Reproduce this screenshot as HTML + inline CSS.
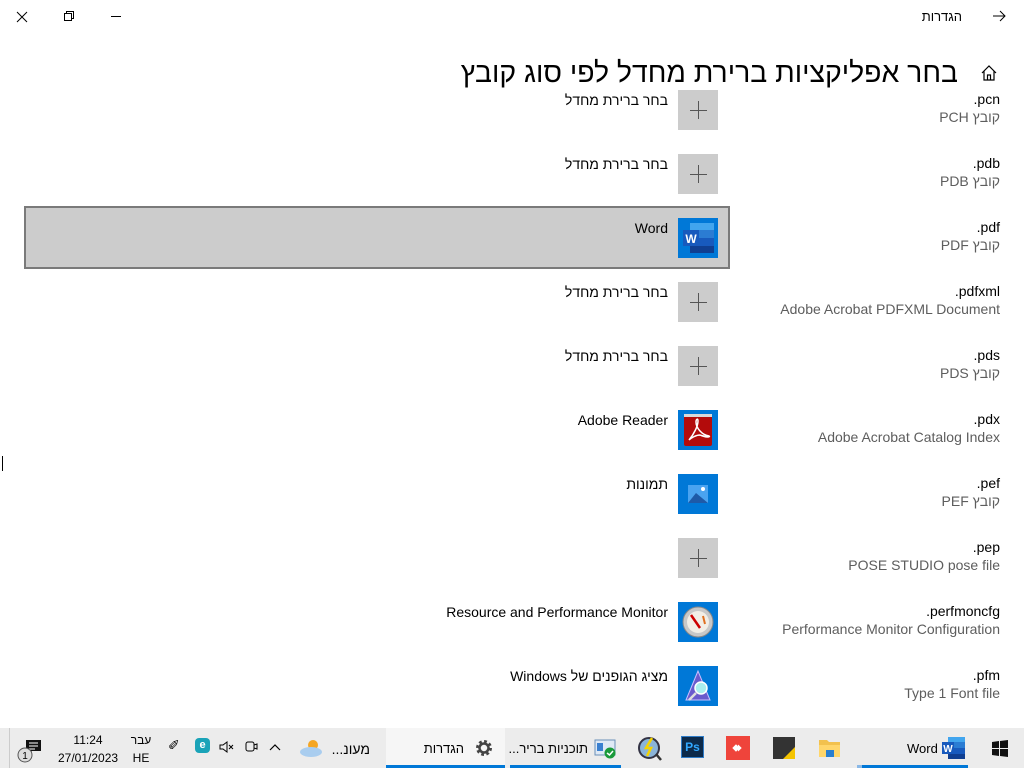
<!DOCTYPE html>
<html><head><meta charset="utf-8"><style>
*{margin:0;padding:0;box-sizing:border-box}
body{width:1024px;height:768px;background:#fff;position:relative;overflow:hidden;font-family:"Liberation Sans","Noto Sans CJK SC",sans-serif;color:#000}
.a{position:absolute}
.t{font-size:14px;white-space:nowrap;line-height:18px}
.r{direction:rtl;text-align:right}
.e{direction:ltr;text-align:right}
.ic{position:absolute;width:40px;height:40px;left:678px}
.plus{background:#cccccc}
.plus:before{content:"";position:absolute;left:12px;top:19.5px;width:17px;height:1px;background:#555}
.plus:after{content:"";position:absolute;left:20px;top:11px;width:1px;height:18px;background:#555}
.blue{background:#0078d7}
.sub{color:#5d5d5d}
#tb{position:absolute;left:0;top:728px;width:1024px;height:40px;background:#ececec}
</style></head><body>

<div class="a" style="left:24px;top:206px;width:706px;height:63px;background:#cccccc;border:2px solid #7a7a7a"></div>

<div class="ic plus" style="top:90px"></div>
<div class="a t r" style="right:356px;top:91px">בחר ברירת מחדל</div>
<div class="a t e" style="right:24px;top:90px">.pcn</div>
<div class="a t r sub" style="right:24px;top:108px">קובץ PCH</div>

<div class="ic plus" style="top:154px"></div>
<div class="a t r" style="right:356px;top:155px">בחר ברירת מחדל</div>
<div class="a t e" style="right:24px;top:154px">.pdb</div>
<div class="a t r sub" style="right:24px;top:172px">קובץ PDB</div>

<div class="ic blue" style="top:218px"><svg width="40" height="40"><rect x="12" y="5" width="24" height="7" fill="#41a5ee"/><rect x="12" y="12" width="24" height="8" fill="#2b7cd3"/><rect x="12" y="20" width="24" height="8" fill="#185abd"/><rect x="12" y="28" width="24" height="7" fill="#103f91"/><rect x="5" y="12" width="16" height="16" fill="#185abd"/><text x="13" y="25" font-size="12" font-weight="bold" fill="#fff" text-anchor="middle" font-family="Liberation Sans">W</text></svg></div>
<div class="a t r" style="right:356px;top:219px">Word</div>
<div class="a t e" style="right:24px;top:218px">.pdf</div>
<div class="a t r sub" style="right:24px;top:236px">קובץ PDF</div>

<div class="ic plus" style="top:282px"></div>
<div class="a t r" style="right:356px;top:283px">בחר ברירת מחדל</div>
<div class="a t e" style="right:24px;top:282px">.pdfxml</div>
<div class="a t sub" style="right:24px;top:300px">Adobe Acrobat PDFXML Document</div>

<div class="ic plus" style="top:346px"></div>
<div class="a t r" style="right:356px;top:347px">בחר ברירת מחדל</div>
<div class="a t e" style="right:24px;top:346px">.pds</div>
<div class="a t r sub" style="right:24px;top:364px">קובץ PDS</div>

<div class="ic blue" style="top:410px"><svg width="40" height="40"><rect x="6" y="4" width="28" height="32" rx="2" fill="#b30b0b"/><rect x="6" y="4" width="28" height="3" fill="#d9d9d9"/><path d="M11 30 C16 24 20 16 20 11 C20 8 18 9 18 12 C18 18 24 25 31 26 C33 27 28 28 22 25 C18 25 13 28 11 30Z" fill="none" stroke="#fff" stroke-width="1.5"/></svg></div>
<div class="a t" style="right:356px;top:411px">Adobe Reader</div>
<div class="a t e" style="right:24px;top:410px">.pdx</div>
<div class="a t sub" style="right:24px;top:428px">Adobe Acrobat Catalog Index</div>

<div class="ic blue" style="top:474px"><svg width="40" height="40"><rect x="10" y="11" width="20" height="18" fill="#4aa3f0"/><path d="M10 29 L18 19 L30 29Z" fill="#1e5aa8"/><circle cx="25" cy="15" r="2" fill="#fff"/></svg></div>
<div class="a t r" style="right:356px;top:475px">תמונות</div>
<div class="a t e" style="right:24px;top:474px">.pef</div>
<div class="a t r sub" style="right:24px;top:492px">קובץ PEF</div>

<div class="ic plus" style="top:538px"></div>
<div class="a t e" style="right:24px;top:538px">.pep</div>
<div class="a t sub" style="right:24px;top:556px">POSE STUDIO pose file</div>

<div class="ic blue" style="top:602px"><svg width="40" height="40"><circle cx="20" cy="20" r="15" fill="#c8c8c8" stroke="#888"/><circle cx="20" cy="20" r="11" fill="#f2eee6"/><path d="M13 13 L22 26" stroke="#c00" stroke-width="2.5"/><path d="M25 14 L27 22" stroke="#e07020" stroke-width="2"/></svg></div>
<div class="a t" style="right:356px;top:603px">Resource and Performance Monitor</div>
<div class="a t e" style="right:24px;top:602px">.perfmoncfg</div>
<div class="a t sub" style="right:24px;top:620px">Performance Monitor Configuration</div>

<div class="ic blue" style="top:666px"><svg width="40" height="40"><path d="M20 5 L8 34 L32 34Z" fill="#6a5acd" stroke="#c8c0ff"/><circle cx="23" cy="22" r="6" fill="#aee" stroke="#fff" stroke-width="1.5"/><path d="M18 27 L11 34" stroke="#ddd" stroke-width="2.5"/></svg></div>
<div class="a t r" style="right:356px;top:667px">מציג הגופנים של Windows</div>
<div class="a t e" style="right:24px;top:666px">.pfm</div>
<div class="a t sub" style="right:24px;top:684px">Type 1 Font file</div>

<div class="a" style="left:2px;top:456px;width:1px;height:15px;background:#000"></div>

<div class="a" style="left:0;top:0;width:1024px;height:90px;background:#fff"></div>
<svg class="a" style="left:14px;top:9px" width="16" height="16"><path d="M3 3 L13 13 M13 3 L3 13" stroke="#000" stroke-width="1"/></svg>
<svg class="a" style="left:62px;top:9px" width="14" height="14"><rect x="2.5" y="4.5" width="7" height="7" fill="none" stroke="#000"/><path d="M4.5 4.5 V2.5 H11.5 V9.5 H9.5" fill="none" stroke="#000"/></svg>
<div class="a" style="left:111px;top:16px;width:10px;height:1px;background:#000"></div>
<div class="a t r" style="right:62px;top:8px;font-size:13px">הגדרות</div>
<svg class="a" style="left:992px;top:9px" width="14" height="14"><path d="M1 7 H13 M8 2 L13 7 L8 12" fill="none" stroke="#000"/></svg>
<div class="a r" style="right:66px;top:53px;font-size:28.4px;line-height:40px;white-space:nowrap">בחר אפליקציות ברירת מחדל לפי סוג קובץ</div>
<svg class="a" style="left:980px;top:64px" width="18" height="18"><path d="M2 9 L9 2 L16 9 M4 7 V16 H14 V7 M7.5 16 V11 H10.5 V16" fill="none" stroke="#000" stroke-width="1.2"/></svg>

<div id="tb"></div>
<div class="a" style="left:386px;top:728px;width:119px;height:40px;background:#f6f6f6"></div>
<div class="a" style="left:386px;top:765px;width:119px;height:3px;background:#0078d7"></div>
<div class="a" style="left:510px;top:765px;width:111px;height:3px;background:#0078d7"></div>
<div class="a" style="left:857px;top:765px;width:5px;height:3px;background:#8ab8e6"></div>
<div class="a" style="left:862px;top:765px;width:106px;height:3px;background:#0078d7"></div>
<div class="a" style="left:9px;top:728px;width:1px;height:40px;background:#ccc"></div>

<svg class="a" style="left:16px;top:738px" width="28" height="26"><path d="M10 2 H25 V13 H16 L13 16 V13 H10Z" fill="#111"/><path d="M13 5 H22 M13 8 H22 M13 11 H19" stroke="#fff"/><circle cx="9" cy="17" r="7" fill="#ddd" stroke="#555"/><text x="9" y="21" font-size="10" text-anchor="middle" font-family="Liberation Sans">1</text></svg>
<div class="a" style="left:58px;top:731px;font-size:12px;line-height:18px;text-align:center;width:60px">11:24<br>27/01/2023</div>
<div class="a" style="left:127px;top:731px;font-size:12px;line-height:18px;text-align:center;width:28px">עבר<br>HE</div>
<div class="a" style="left:168px;top:737px;font-size:14px">✐</div>
<div class="a" style="left:195px;top:738px;width:15px;height:15px;border-radius:4px;background:#1aa3b8;color:#fff;font-size:11px;font-weight:bold;text-align:center;line-height:15px">e</div>
<svg class="a" style="left:218px;top:740px" width="18" height="14"><path d="M2 5 H5 L9 2 V12 L5 9 H2Z" fill="none" stroke="#000"/><path d="M11 5 L15 9 M15 5 L11 9" stroke="#000"/></svg>
<svg class="a" style="left:244px;top:739px" width="14" height="16"><rect x="2" y="3" width="8" height="9" rx="2" fill="none" stroke="#000"/><path d="M10 6 L13 5 V10 L10 9" fill="none" stroke="#000"/></svg>
<svg class="a" style="left:268px;top:742px" width="14" height="10"><path d="M2 8 L7 3 L12 8" fill="none" stroke="#000" stroke-width="1.2"/></svg>
<svg class="a" style="left:297px;top:736px" width="28" height="24"><circle cx="16" cy="9" r="5" fill="#f5a623"/><ellipse cx="14" cy="16" rx="11" ry="5" fill="#a9cdef"/></svg>
<div class="a t r" style="right:654px;top:740px">מעונ...</div>
<div class="a t r" style="right:560px;top:740px;font-size:13px">הגדרות</div>
<svg class="a" style="left:474px;top:738px" width="20" height="20"><circle cx="10" cy="10" r="6" fill="none" stroke="#444" stroke-width="4" stroke-dasharray="2.5 2.2"/><circle cx="10" cy="10" r="4.5" fill="none" stroke="#444" stroke-width="2.5"/></svg>
<div class="a t r" style="right:436px;top:740px;font-size:13px">תוכניות בריר...</div>
<svg class="a" style="left:594px;top:738px" width="24" height="22"><rect x="1" y="2" width="20" height="15" fill="#dfe9f5" stroke="#6a8fb8"/><rect x="3" y="5" width="6" height="8" fill="#3a80d0"/><circle cx="16" cy="15" r="5.5" fill="#1a9a3a"/><path d="M13 15 L15.5 17 L19 13" stroke="#fff" fill="none" stroke-width="1.5"/></svg>
<svg class="a" style="left:636px;top:734px" width="28" height="28"><circle cx="13" cy="14" r="10" fill="#8ab4d8" stroke="#334" stroke-width="2"/><path d="M16 4 L10 14 H15 L11 22" stroke="#f5d300" stroke-width="2.5" fill="none"/><path d="M20 20 L25 26" stroke="#333" stroke-width="2.5"/></svg>
<div class="a" style="left:681px;top:736px;width:23px;height:22px;background:#0c2a4a;border:1px solid #2f7cc8;color:#31a8ff;font-size:12px;font-weight:bold;text-align:center;line-height:20px">Ps</div>
<div class="a" style="left:726px;top:736px;width:24px;height:24px;background:#ef443b"></div>
<svg class="a" style="left:726px;top:736px" width="24" height="24"><path d="M7 12 L10 9 L13 12 L10 15Z M12 9 L15 12 L12 15" fill="#fff" stroke="#fff"/></svg>
<div class="a" style="left:773px;top:737px;width:22px;height:22px;background:#333"></div>
<svg class="a" style="left:773px;top:737px" width="22" height="22"><path d="M22 10 V22 H10Z" fill="#f5c400"/></svg>
<svg class="a" style="left:818px;top:737px" width="24" height="22"><path d="M1 3 H9 L11 5 H22 V20 H1Z" fill="#f2c14e"/><rect x="1" y="8" width="21" height="12" fill="#ffd66b"/><rect x="8" y="13" width="8" height="7" fill="#2a7fd0"/></svg>
<div class="a t" style="left:907px;top:740px;font-size:13px">Word</div>
<svg class="a" style="left:940px;top:736px" width="26" height="24"><rect x="8" y="1" width="17" height="5" fill="#41a5ee"/><rect x="8" y="6" width="17" height="6" fill="#2b7cd3"/><rect x="8" y="12" width="17" height="6" fill="#185abd"/><rect x="8" y="18" width="17" height="5" fill="#103f91"/><rect x="2" y="6" width="12" height="12" fill="#185abd"/><text x="8" y="16" font-size="10" font-weight="bold" fill="#fff" text-anchor="middle" font-family="Liberation Sans">W</text></svg>
<svg class="a" style="left:991px;top:740px" width="18" height="18"><path d="M1 2 L8 1 V8 H1Z M9 1 L17 0 V8 H9Z M1 9 H8 V16 L1 15Z M9 9 H17 V17 L9 16Z" fill="#111"/></svg>
</body></html>
